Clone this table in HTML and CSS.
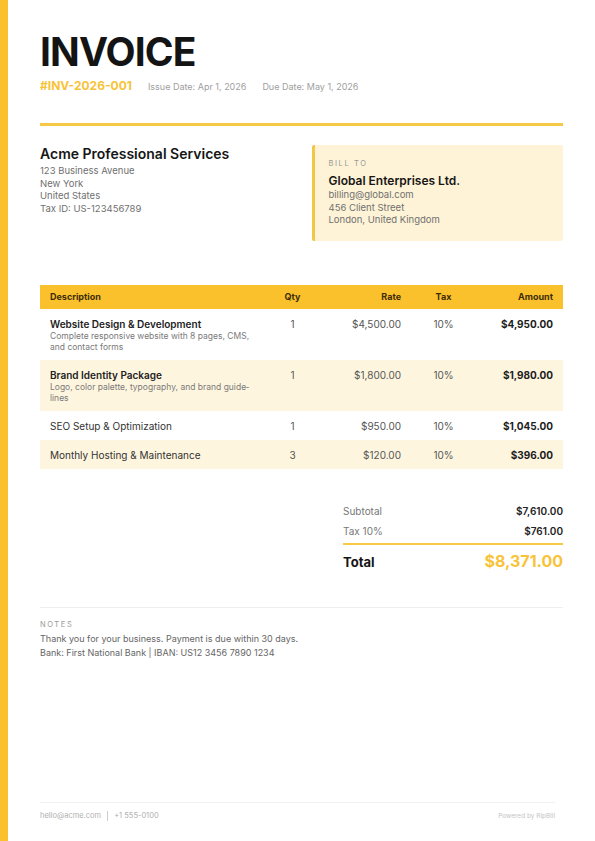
FILE: index.html
```html
<!DOCTYPE html>
<html lang="en">
<head>
<meta charset="utf-8">
<title>Invoice</title>
<link rel="stylesheet" href="styles.css">
</head>
<body>
<div class="page">
  <div class="accent-bar"></div>
  <div class="sheet">
    <header class="head">
      <h1 class="title">INVOICE</h1>
      <div class="meta">
        <span class="inv-no">#INV-2026-001</span>
        <span class="date">Issue Date: Apr 1, 2026</span>
        <span class="date">Due Date: May 1, 2026</span>
      </div>
    </header>
    <div class="rule"></div>

    <section class="parties">
      <div class="from">
        <div class="company">Acme Professional Services</div>
        <div class="addr">123 Business Avenue</div>
        <div class="addr">New York</div>
        <div class="addr">United States</div>
        <div class="addr">Tax ID: US-123456789</div>
      </div>
      <div class="billto">
        <div class="billto-label">BILL TO</div>
        <div class="client">Global Enterprises Ltd.</div>
        <div class="addr">billing@global.com</div>
        <div class="addr">456 Client Street</div>
        <div class="addr">London, United Kingdom</div>
      </div>
    </section>

    <table class="items">
      <colgroup>
        <col class="c-desc"><col class="c-qty"><col class="c-rate"><col class="c-tax"><col class="c-amt">
      </colgroup>
      <thead>
        <tr>
          <th class="left">Description</th>
          <th class="center">Qty</th>
          <th class="right">Rate</th>
          <th class="center">Tax</th>
          <th class="right">Amount</th>
        </tr>
      </thead>
      <tbody>
        <tr>
          <td><div class="item-title">Website Design &amp; Development</div><div class="item-desc">Complete responsive website with 8 pages, CMS, and contact forms</div></td>
          <td class="center num">1</td>
          <td class="right num">$4,500.00</td>
          <td class="center num">10%</td>
          <td class="right amt">$4,950.00</td>
        </tr>
        <tr class="alt">
          <td><div class="item-title">Brand Identity Package</div><div class="item-desc">Logo, color palette, typography, and brand guide&shy;lines</div></td>
          <td class="center num">1</td>
          <td class="right num">$1,800.00</td>
          <td class="center num">10%</td>
          <td class="right amt">$1,980.00</td>
        </tr>
        <tr>
          <td><div class="item-plain">SEO Setup &amp; Optimization</div></td>
          <td class="center num">1</td>
          <td class="right num">$950.00</td>
          <td class="center num">10%</td>
          <td class="right amt">$1,045.00</td>
        </tr>
        <tr class="alt">
          <td><div class="item-plain">Monthly Hosting &amp; Maintenance</div></td>
          <td class="center num">3</td>
          <td class="right num">$120.00</td>
          <td class="center num">10%</td>
          <td class="right amt">$396.00</td>
        </tr>
      </tbody>
    </table>

    <section class="totals">
      <div class="t-row"><span class="t-label">Subtotal</span><span class="t-val">$7,610.00</span></div>
      <div class="t-row"><span class="t-label">Tax 10%</span><span class="t-val">$761.00</span></div>
      <div class="t-line"></div>
      <div class="t-total"><span class="total-label">Total</span><span class="total-val">$8,371.00</span></div>
    </section>

    <section class="notes">
      <div class="notes-label">NOTES</div>
      <div class="notes-text">Thank you for your business. Payment is due within 30 days.</div>
      <div class="notes-text">Bank: First National Bank | IBAN: US12 3456 7890 1234</div>
    </section>

    <footer class="foot">
      <div class="contact"><span>hello@acme.com</span><span class="sep"></span><span>+1 555-0100</span></div>
      <div class="powered">Powered by RipBill</div>
    </footer>
  </div>
</div>
</body>
</html>
```
FILE: styles.css
```css
* { box-sizing: border-box; }
html, body { margin: 0; padding: 0; background: #fff; }
body {
  font-family: Inter, "Noto Sans", Arial, sans-serif;
  color: #1a1a1a;
}
.page {
  display: flex;
  min-height: 841px;
  width: 595px;
}
.accent-bar {
  width: 8px;
  flex: none;
  background: #fbc12d;
}
.sheet {
  flex: 1;
  display: flex;
  flex-direction: column;
  padding: 32px 32px 0 32px;
}
.title {
  margin: 0;
  font-size: 39px;
  line-height: 40px;
  font-weight: 700;
  letter-spacing: -0.9px;
  color: #141414;
}
.meta {
  margin-top: 6px;
  display: flex;
  align-items: baseline;
  gap: 16px;
  line-height: 16px;
}
.inv-no {
  font-size: 12px;
  font-weight: 700;
  color: #f7c338;
}
.date {
  font-size: 9px;
  color: #a0a0a0;
}
.rule {
  margin-top: 28px;
  height: 3px;
  background: #f6c844;
}
.parties {
  margin-top: 19px;
  display: grid;
  grid-template-columns: 1fr 1fr;
  gap: 20px;
}
.company {
  font-size: 14px;
  line-height: 18px;
  font-weight: 600;
  color: #161616;
  margin-bottom: 2px;
}
.addr {
  font-size: 9.5px;
  line-height: 12.5px;
  color: #707070;
}
.billto {
  background: #fef3d7;
  border-left: 3px solid #f3c746;
  border-radius: 2px;
  padding: 14px 16px 14px 14px;
}
.billto-label {
  font-size: 7.5px;
  line-height: 10px;
  letter-spacing: 1.6px;
  color: #9a9a9a;
  margin-bottom: 4px;
}
.client {
  font-size: 12px;
  line-height: 16px;
  font-weight: 600;
  color: #161616;
}
.items {
  margin-top: 44px;
  width: 100%;
  border-collapse: collapse;
  table-layout: fixed;
}
.c-desc { width: 225px; }
.c-qty { width: 55px; }
.c-rate { width: 91px; }
.c-tax { width: 65px; }
.c-amt { width: 87px; }
.items th {
  background: #fbc12d;
  height: 24px;
  padding: 0 10px;
  font-size: 9px;
  font-weight: 700;
  color: #3d2d06;
}
.items td {
  padding: 9px 10px 7px;
  vertical-align: top;
  font-size: 10px;
  line-height: 13px;
}
.items tr.alt td { background: #fef5df; }
.left { text-align: left; }
.center { text-align: center; }
.right { text-align: right; }
.item-title {
  font-weight: 600;
  color: #222;
  font-size: 10px;
  line-height: 13px;
}
.item-plain {
  color: #333;
  font-size: 10px;
  line-height: 13px;
}
.item-desc {
  font-size: 8.5px;
  line-height: 11px;
  color: #7a7a7a;
  hyphens: manual;
}
.num { color: #555; }
.amt { font-weight: 700; color: #1c1c1c; }
.totals {
  margin-top: 32px;
  margin-left: auto;
  width: 220px;
}
.t-row {
  display: flex;
  justify-content: space-between;
  line-height: 20px;
  font-size: 10px;
}
.t-label { color: #777; }
.t-val { color: #222; font-weight: 600; }
.t-line {
  margin-top: 2px;
  height: 2px;
  background: #f6c844;
}
.t-total {
  margin-top: 6px;
  display: flex;
  justify-content: space-between;
  align-items: baseline;
  line-height: 20px;
}
.total-label {
  font-size: 13px;
  font-weight: 700;
  color: #141414;
}
.total-val {
  font-size: 16px;
  font-weight: 700;
  color: #f7c338;
}
.notes {
  margin-top: 35px;
  border-top: 1px solid #eeeeee;
  padding-top: 12px;
}
.notes-label {
  font-size: 7.5px;
  line-height: 10px;
  letter-spacing: 1.6px;
  color: #999;
  margin-bottom: 2px;
}
.notes-text {
  font-size: 9px;
  line-height: 14px;
  color: #666;
}
.foot {
  margin-top: auto;
  margin-right: 8px;
  border-top: 1px solid #f2f2f2;
  padding: 7px 0 19px;
  display: flex;
  justify-content: space-between;
  align-items: center;
  font-size: 7.5px;
  line-height: 12px;
  color: #b0b0b0;
}
.contact { display: flex; align-items: center; gap: 6px; }
.sep {
  display: inline-block;
  width: 1px;
  height: 10px;
  background: #ccc;
}
.powered { font-size: 6.5px; color: #c4c4c4; }
```
